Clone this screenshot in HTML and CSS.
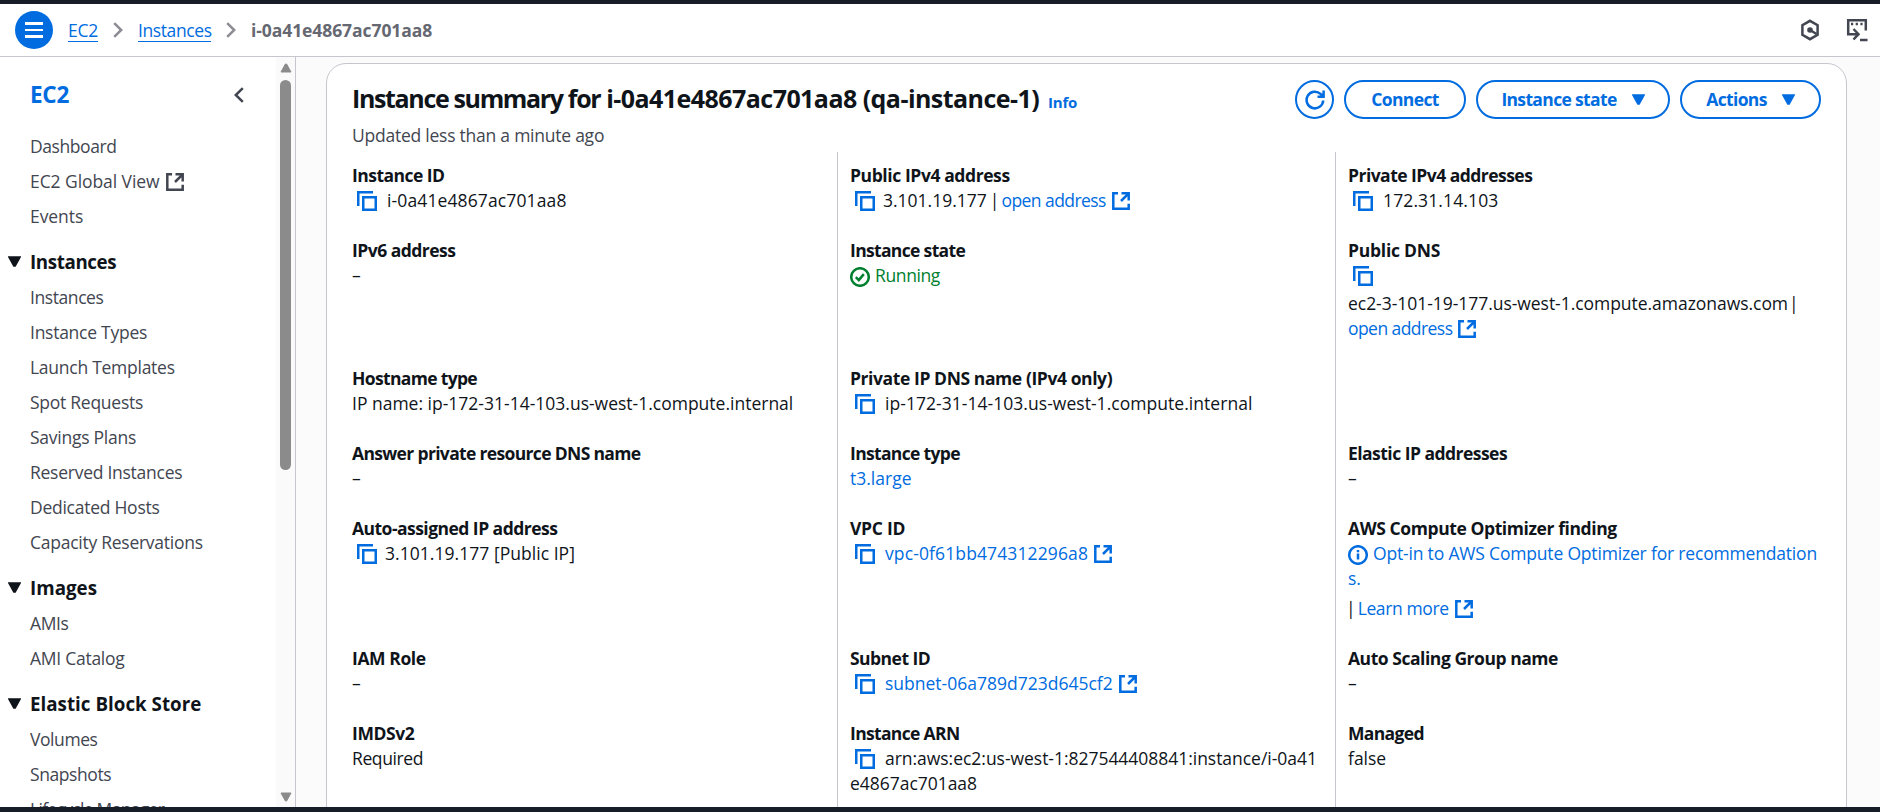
FILE: index.html
```html
<!DOCTYPE html>
<html lang="en">
<head>
<meta charset="utf-8">
<title>Instance details | EC2</title>
<link rel="stylesheet" href="styles.css">
</head>
<body>
<svg class="sprite" aria-hidden="true">
  <symbol id="copy" viewBox="0 0 20 20"><path d="M1.250 15V1.250H16M6.250 6.250h12.500v12.500H6.250z"/></symbol>
  <symbol id="external" viewBox="0 0 18 18"><path d="M6 1.300H1.300v15.400h15.400v-5M9.500 1.300h7.200v7.200M16.200 1.800L9 9"/></symbol>
  <symbol id="chevron" viewBox="0 0 10 16"><path d="M1.200 1.200L8.200 8l-7 6.800"/></symbol>
  <symbol id="caret" viewBox="0 0 12 10"><path d="M1 1h10L6.600 9H5.400z"/></symbol>
</svg>
<div class="app">
  <header class="topbar">
    <button class="menu-btn" aria-label="Menu"><span></span><span></span><span></span></button>
    <nav class="crumbs">
      <a href="#" class="crumb-ec2">EC2</a>
      <svg class="crumb-sep"><use href="#chevron"/></svg>
      <a href="#" class="crumb-inst">Instances</a>
      <svg class="crumb-sep"><use href="#chevron"/></svg>
      <span class="crumb-current">i-0a41e4867ac701aa8</span>
    </nav>
    <div class="tools">
      <svg width="20" height="22" viewBox="0 0 20 22"><path d="M10 1.800l7.600 4.400v9.600L10 20.200l-7.600-4.400V6.200z"/><circle class="solid" cx="10" cy="11" r="2.800"/><path d="M10 11l6.500 4"/></svg>
      <svg width="22" height="24" viewBox="0 0 22 24"><path d="M6.500 16.200H2.200V2.200h17.600V12.500M5 6h2.200M9.700 6h2.200M14.400 6h2.200M5 16.200h7M7.500 11l5 5.200-5 5.300M14 22h7.500"/></svg>
    </div>
  </header>
  <div class="main">
    <aside class="sidebar">
      <div class="side-content">
        <div class="side-head">
          <a href="#">EC2</a>
          <svg width="10" height="16" class="collapse"><use href="#chevron"/></svg>
        </div>
        <ul class="side-list">
          <li class="tight">Dashboard</li>
          <li class="loose">EC2 Global View <svg class="ext"><use href="#external"/></svg></li>
          <li class="loose">Events</li>
        </ul>
        <h3 class="side-section tight"><svg><use href="#caret"/></svg>Instances</h3>
        <ul class="side-list">
          <li class="tight">Instances</li>
          <li>Instance Types</li>
          <li>Launch Templates</li>
          <li>Spot Requests</li>
          <li>Savings Plans</li>
          <li>Reserved Instances</li>
          <li>Dedicated Hosts</li>
          <li>Capacity Reservations</li>
        </ul>
        <h3 class="side-section"><svg><use href="#caret"/></svg>Images</h3>
        <ul class="side-list">
          <li class="tight">AMIs</li>
          <li>AMI Catalog</li>
        </ul>
        <h3 class="side-section"><svg><use href="#caret"/></svg>Elastic Block Store</h3>
        <ul class="side-list">
          <li class="tight">Volumes</li>
          <li class="tight">Snapshots</li>
          <li class="tighter">Lifecycle Manager</li>
        </ul>
      </div>
      <div class="scrollbar">
        <svg class="up"><use href="#caret"/></svg>
        <div class="thumb"></div>
        <svg class="down"><use href="#caret"/></svg>
      </div>
    </aside>
    <main class="content">
      <section class="card">
        <div class="card-head">
          <div class="card-title">
            <h1><span class="lead">Instance summary for</span> i-0a41e4867ac701aa8 (qa-instance-1)</h1>
            <a href="#" class="info">Info</a>
          </div>
          <div class="actions">
            <button class="btn refresh" aria-label="Refresh"><svg width="20" height="20" viewBox="0 0 20 20"><path d="M18.200 10.500A8.300 8.300 0 1 1 15.500 3.900L18.200 6.300M18.600 .500V6.700H12.500"/></svg></button>
            <button class="btn connect">Connect</button>
            <button class="btn state">Instance state<svg><use href="#caret"/></svg></button>
            <button class="btn act">Actions<svg><use href="#caret"/></svg></button>
          </div>
        </div>
        <p class="updated">Updated less than a minute ago</p>
        <div class="grid">
          <div class="cell"><h4>Instance ID</h4><div class="val hex"><svg class="copy"><use href="#copy"/></svg>i-0a41e4867ac701aa8</div></div>
          <div class="cell"><h4 class="wide">Public IPv4 address</h4><div class="val"><svg class="copy near"><use href="#copy"/></svg>3.101.19.177<span class="bar">|</span><a href="#" class="open">open address<svg class="ext"><use href="#external"/></svg></a></div></div>
          <div class="cell"><h4>Private IPv4 addresses</h4><div class="val hex"><svg class="copy"><use href="#copy"/></svg>172.31.14.103</div></div>

          <div class="cell"><h4>IPv6 address</h4><div class="val">–</div></div>
          <div class="cell"><h4 class="narrow">Instance state</h4><div class="val ok"><svg class="status" viewBox="0 0 20 20"><circle cx="10" cy="10" r="8.800"/><path d="M5.800 10.200l3 2.900 5-6"/></svg><span class="tight">Running</span></div></div>
          <div class="cell"><h4 class="wider">Public DNS</h4><div class="val copy-line"><svg class="copy"><use href="#copy"/></svg></div><div class="val dns">ec2-3-101-19-177.us-west-1.compute.amazonaws.com<span class="bar">|</span></div><div class="val"><a href="#" class="open">open address<svg class="ext"><use href="#external"/></svg></a></div></div>

          <div class="cell"><h4 class="narrow">Hostname type</h4><div class="val">IP name: ip-172-31-14-103.us-west-1.compute.internal</div></div>
          <div class="cell"><h4 class="wide">Private IP DNS name (IPv4 only)</h4><div class="val dash"><svg class="copy"><use href="#copy"/></svg>ip-172-31-14-103.us-west-1.compute.internal</div></div>
          <div class="cell"></div>

          <div class="cell"><h4 class="narrow">Answer private resource DNS name</h4><div class="val">–</div></div>
          <div class="cell"><h4 class="narrow">Instance type</h4><div class="val"><a href="#">t3.large</a></div></div>
          <div class="cell"><h4>Elastic IP addresses</h4><div class="val">–</div></div>

          <div class="cell"><h4>Auto-assigned IP address</h4><div class="val dash"><svg class="copy near"><use href="#copy"/></svg>3.101.19.177 [Public IP]</div></div>
          <div class="cell"><h4 class="wider">VPC ID</h4><div class="val hex"><svg class="copy"><use href="#copy"/></svg><a href="#">vpc-0f61bb474312296a8<svg class="ext"><use href="#external"/></svg></a></div></div>
          <div class="cell"><h4 class="wide">AWS Compute Optimizer finding</h4><div class="val optin"><a href="#"><svg class="status" viewBox="0 0 20 20"><circle cx="10" cy="10" r="8.800"/><path d="M10 8.500V14.500M10 5v2.300"/></svg>Opt-in to AWS Compute Optimizer for recommendation<br>s.</a></div><div class="val learn"><span class="bar first">|</span><a href="#" class="tight">Learn more<svg class="ext"><use href="#external"/></svg></a></div></div>

          <div class="cell"><h4 class="wide">IAM Role</h4><div class="val">–</div></div>
          <div class="cell"><h4>Subnet ID</h4><div class="val"><svg class="copy"><use href="#copy"/></svg><a href="#">subnet-06a789d723d645cf2<svg class="ext"><use href="#external"/></svg></a></div></div>
          <div class="cell"><h4 class="group">Auto Scaling Group name</h4><div class="val">–</div></div>

          <div class="cell"><h4 class="wide">IMDSv2</h4><div class="val tight">Required</div></div>
          <div class="cell"><h4 class="narrow">Instance ARN</h4><div class="val arn"><svg class="copy"><use href="#copy"/></svg>arn:aws:ec2:us-west-1:827544408841:instance/i-0a41<br>e4867ac701aa8</div></div>
          <div class="cell"><h4 class="narrow">Managed</h4><div class="val">false</div></div>
        </div>
      </section>
    </main>
  </div>
</div>
</body>
</html>
```
FILE: styles.css
```css
* { box-sizing: border-box; }
body {
  margin: 0;
  font: 400 17.5px/25px "Open Sans", "Noto Sans", sans-serif;
  color: #0f141a;
  background: #fff;
}
h1, h3, h4, p, ul { margin: 0; padding: 0; font-weight: 700; }
p, ul { font-weight: 400; }
ul { list-style: none; }
a { color: #006ce0; text-decoration: none; }
button { font: inherit; padding: 0; }
svg { fill: none; stroke: currentColor; stroke-width: 2.5; }
.sprite { display: none; }
.solid { fill: currentColor; stroke: none; }

.app {
  height: 812px;
  display: flex;
  flex-direction: column;
  border-top: 4px solid #161d26;
  border-bottom: 5px solid #161d26;
  overflow: hidden;
}

/* Top bar */
.topbar {
  flex: none;
  height: 53px;
  display: flex;
  align-items: center;
  padding: 0 12px 0 15px;
  border-bottom: 1px solid #c6c6cd;
}
.menu-btn {
  width: 38px;
  height: 38px;
  border: 0;
  border-radius: 50%;
  background: #006ce0;
  display: flex;
  flex-direction: column;
  align-items: center;
  justify-content: center;
  gap: 4px;
}
.menu-btn span { width: 18px; height: 2.5px; background: #fff; }
.crumbs { display: flex; align-items: center; margin-left: 15px; }
.crumbs a { line-height: 22px; border-bottom: 1px solid #006ce0; white-space: nowrap; }
.crumbs .crumb-ec2 { width: 30px; letter-spacing: -.3px; }
.crumbs .crumb-inst { width: 73px; letter-spacing: -.4px; }
.crumb-sep { width: 10px; height: 16px; margin: 0 15px; color: #8c8c94; }
.crumb-current { font-weight: 700; color: #656871; letter-spacing: -.08px; }
.tools { margin-left: auto; display: flex; align-items: center; gap: 26px; color: #424650; }

.main { flex: 1; min-height: 0; display: flex; }

/* Sidebar */
.sidebar { width: 296px; flex: none; display: flex; border-right: 1px solid #c6c6cd; overflow: hidden; }
.side-content { flex: 1; padding: 24px 0 0 30px; overflow: hidden; color: #424650; letter-spacing: -.26px; }
.side-head { display: flex; justify-content: space-between; align-items: center; height: 28px; padding-right: 32px; margin-bottom: 25px; }
.side-head a { font-weight: 700; font-size: 22.5px; line-height: 28px; }
.collapse { transform: rotate(180deg); }
.side-list li { height: 25px; margin-bottom: 10px; white-space: nowrap; }
.side-list .tight { letter-spacing: -.42px; }
.side-list .tighter { letter-spacing: -.7px; }
.side-list .loose { letter-spacing: -.07px; }
.side-section { margin: 19px 0 11px -23px; height: 26px; display: flex; align-items: center; color: #0f141a; font-size: 18.75px; letter-spacing: .02px; }
.side-section.tight { letter-spacing: -.38px; }
.side-section svg { width: 13px; height: 11px; margin: 0 9px 0 1px; fill: currentColor; stroke-width: 1.5; }
.scrollbar { width: 19px; flex: none; background: #fafafa; display: flex; flex-direction: column; align-items: center; padding: 6px 0 5px; color: #8b8b8b; }
.scrollbar svg { width: 12px; height: 10px; fill: currentColor; stroke-width: 1; }
.up { transform: rotate(180deg); }
.thumb { width: 11px; height: 390px; margin-top: 7px; border-radius: 6px; background: #8b8b8b; }
.down { margin-top: auto; }

/* Inline icons */
.ext { width: 18px; height: 18px; vertical-align: -3px; margin-left: 6px; }
.side-list .ext { margin-left: 2px; }
.copy { width: 20px; height: 20px; margin: 0 10px 0 5px; vertical-align: -4px; color: #006ce0; }
.copy.near { margin-right: 8px; }
.status { width: 20px; height: 20px; margin-right: 5px; vertical-align: -5px; }

/* Summary card */
.content { flex: 1; background: #fbfbfc; padding: 6px 33px 0 30px; }
.card { height: 900px; background: #fff; border: 1px solid #c6c6cd; border-radius: 20px; padding: 16px 25px 0; }
.card-head { display: flex; justify-content: space-between; height: 38px; }
.card-title { display: flex; align-items: baseline; white-space: nowrap; }
h1 { flex: none; font-size: 25px; line-height: 36px; width: 696px; letter-spacing: -.55px; }
h1 .lead { letter-spacing: -1.35px; }
.info { font-size: 15px; font-weight: 700; letter-spacing: -.2px; }
.actions { display: flex; gap: 10px; }
.btn { height: 39px; border: 2px solid #006ce0; border-radius: 20px; background: #fff; color: #006ce0; font-weight: 700; display: flex; align-items: center; justify-content: center; letter-spacing: -.65px; white-space: nowrap; }
.refresh { width: 39px; }
.connect { width: 122px; }
.state { width: 194px; }
.act { width: 141px; }
.state svg, .act svg { width: 13px; height: 11px; margin-left: 15px; fill: currentColor; stroke-width: 1.5; }
.updated { color: #424650; margin-top: 5px; height: 29px; letter-spacing: -.24px; }

.grid { display: grid; grid-template-columns: 485px 498px 486px; }
.cell { padding: 0 0 25px 12px; border-left: 1px solid #c6c6cd; white-space: nowrap; }
.cell:nth-child(3n+1) { padding-left: 0; border-left: 0; }
.cell:nth-child(-n+3) { padding-top: 11px; }
h4 { font-size: 17.5px; letter-spacing: -.53px; }
h4.narrow { letter-spacing: -.66px; }
h4.wide { letter-spacing: -.41px; }
h4.wider { letter-spacing: -.25px; }
h4.group { letter-spacing: -.46px; }
.val { height: 25px; }
.val.tight, .val .tight { letter-spacing: -.38px; }
.hex { letter-spacing: .12px; }
.dash { letter-spacing: .04px; }
.dns { letter-spacing: -.04px; }
.arn { letter-spacing: -.03px; }
.open { letter-spacing: -.56px; }
.bar { margin: 0 2px 0 3px; }
.dns .bar { margin-left: 1px; }
.bar.first { margin: 0 2px 0 -2px; }
.optin { height: 50px; letter-spacing: -.18px; }
.val:has(br) { height: 50px; }
.copy-line { height: 28px; }
.learn { margin-top: 5px; }
.ok { color: #00802f; }
```
